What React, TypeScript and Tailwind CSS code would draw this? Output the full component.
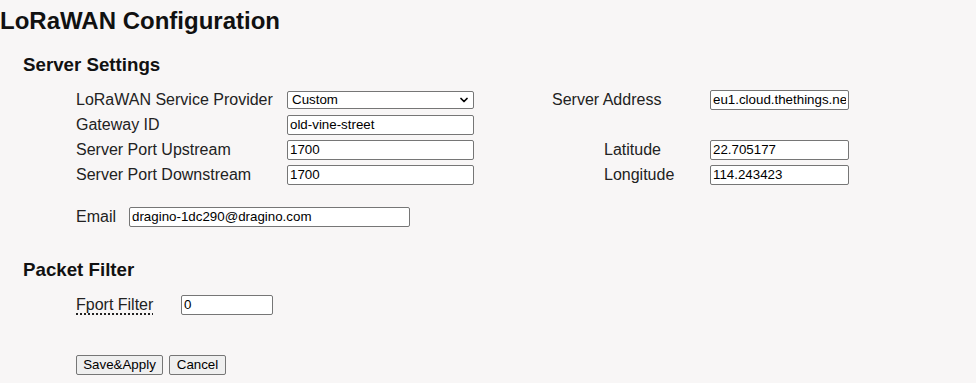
import { ChevronDown } from 'lucide-react'

const inputCls =
  'h-[20px] border border-[#767676] rounded-[2px] bg-white px-[2px] text-[13.33px] leading-[16px] text-black outline-none'

const btnCls =
  'h-[20px] border border-[#767676] rounded-[2px] bg-[#efefef] text-[13.33px] leading-[16px] text-black'

function Row({ label, children, labelCls = '' }: { label?: string; children?: React.ReactNode; labelCls?: string }) {
  return (
    <div className="h-[25px] flex items-center">
      <span className={labelCls}>{label}</span>
      {children}
    </div>
  )
}

export default function App() {
  return (
    <div className="min-h-[383px] bg-[#f8f6f6] text-[#222] font-['Liberation_Sans',Arial,sans-serif] text-[16px] leading-[25px]">
      <h2 className="pt-[7px] text-[24px] leading-[28px] font-bold text-[#111]">LoRaWAN Configuration</h2>

      <h3 className="mt-[19px] pl-[23px] text-[18.72px] leading-[22px] font-bold text-[#111]">Server Settings</h3>

      <div className="mt-[11px] flex">
        <div className="ml-[76px] flex flex-col">
          <Row label="LoRaWAN Service Provider" labelCls="w-[211px]">
            <div className="relative flex">
              <select
                defaultValue="custom"
                className="appearance-none w-[187px] h-[18px] border border-[#767676] rounded-[2px] bg-white pl-[4px] text-[13.33px] leading-[14px] text-black outline-none"
              >
                <option value="custom">Custom</option>
                <option value="ttn">The Things Network</option>
              </select>
              <ChevronDown
                size={12}
                strokeWidth={3.5}
                className="absolute right-[4px] top-[3px] text-black pointer-events-none"
              />
            </div>
          </Row>
          <Row label="Gateway ID" labelCls="w-[211px]">
            <input className={`${inputCls} w-[187px]`} defaultValue="old-vine-street" />
          </Row>
          <Row label="Server Port Upstream" labelCls="w-[211px]">
            <input className={`${inputCls} w-[187px]`} defaultValue="1700" />
          </Row>
          <Row label="Server Port Downstream" labelCls="w-[211px]">
            <input className={`${inputCls} w-[187px]`} defaultValue="1700" />
          </Row>
        </div>

        <div className="ml-[78px] flex flex-col">
          <Row label="Server Address" labelCls="w-[158px]">
            <input className={`${inputCls} w-[139px]`} defaultValue="eu1.cloud.thethings.network" />
          </Row>
          <Row />
          <Row label="Latitude" labelCls="w-[158px] pl-[52px]">
            <input className={`${inputCls} w-[139px]`} defaultValue="22.705177" />
          </Row>
          <Row label="Longitude" labelCls="w-[158px] pl-[52px]">
            <input className={`${inputCls} w-[139px]`} defaultValue="114.243423" />
          </Row>
        </div>
      </div>

      <div className="mt-[17px] ml-[76px]">
        <Row label="Email" labelCls="w-[53px]">
          <input className={`${inputCls} w-[281px]`} defaultValue="dragino-1dc290@dragino.com" />
        </Row>
      </div>

      <h3 className="mt-[30px] pl-[23px] text-[18.72px] leading-[22px] font-bold text-[#111]">Packet Filter</h3>

      <div className="mt-[11px] ml-[76px]">
        <div className="h-[25px] flex items-center">
          <abbr title="Filter packets by FPort" className="w-[105px] no-underline">
            <span className="underline decoration-dotted decoration-[1.5px] underline-offset-[3px]">Fport Filter</span>
          </abbr>
          <input className={`${inputCls} w-[92px]`} defaultValue="0" />
        </div>
      </div>

      <div className="mt-[38px] ml-[76px] flex gap-[6px]">
        <button className={`${btnCls} w-[87px]`}>Save&amp;Apply</button>
        <button className={`${btnCls} w-[57px]`}>Cancel</button>
      </div>
    </div>
  )
}
